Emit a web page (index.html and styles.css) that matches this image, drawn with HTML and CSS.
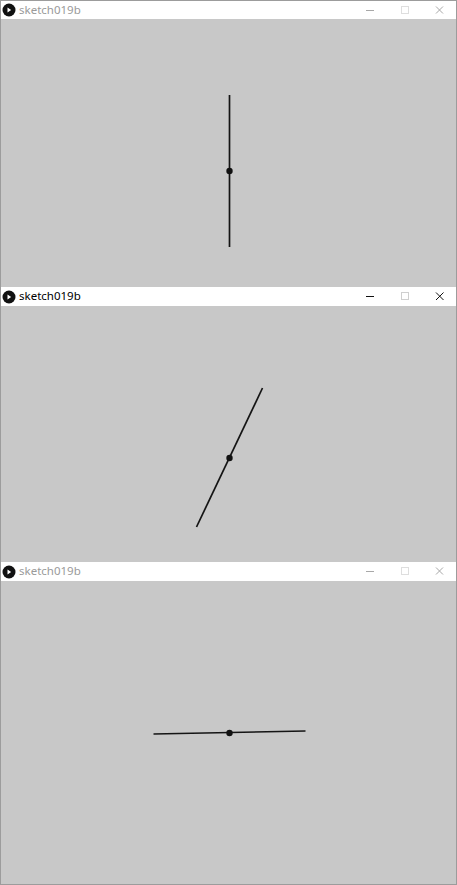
FILE: index.html
```html
<!DOCTYPE html>
<html>
<head>
<meta charset="utf-8">
<link rel="stylesheet" href="styles.css">
</head>
<body>
<div class="frame">
  <section class="win inactive">
    <header class="title t18">
      <span class="app-icon"><svg width="14" height="14" viewBox="0 0 14 14"><circle cx="7" cy="7" r="6.5" fill="#111"/><path d="M5.5 4.6 L9.2 7 L5.5 9.4 Z" fill="#fff"/></svg></span>
      <span class="name">sketch019b</span>
      <span class="ctrls">
        <svg class="ctl" width="36" height="18" viewBox="0 0 36 18"><path d="M13 9.5 H21" stroke="currentColor" stroke-width="1"/></svg>
        <svg class="ctl max" width="34" height="18" viewBox="0 0 34 18"><rect x="12.5" y="5.5" width="7" height="7" fill="none" stroke="currentColor"/></svg>
        <svg class="ctl" width="33" height="18" viewBox="0 0 33 18"><path d="M13 5.5 L20 12.5 M20 5.5 L13 12.5" stroke="currentColor" stroke-width="1"/></svg>
      </span>
    </header>
    <div class="canvas c1">
      <svg width="455" height="268" viewBox="0 0 455 268"><line x1="228.5" y1="76" x2="228.5" y2="228" class="stick"/><circle cx="228.5" cy="152" r="3.2" fill="#111"/></svg>
    </div>
  </section>
  <section class="win active">
    <header class="title t19">
      <span class="app-icon"><svg width="14" height="14" viewBox="0 0 14 14"><circle cx="7" cy="7" r="6.5" fill="#111"/><path d="M5.5 4.6 L9.2 7 L5.5 9.4 Z" fill="#fff"/></svg></span>
      <span class="name">sketch019b</span>
      <span class="ctrls">
        <svg class="ctl" width="36" height="19" viewBox="0 0 36 19"><path d="M13 9.5 H21" stroke="currentColor" stroke-width="1"/></svg>
        <svg class="ctl max" width="34" height="19" viewBox="0 0 34 19"><rect x="12.5" y="5.5" width="7" height="7" fill="none" stroke="currentColor"/></svg>
        <svg class="ctl" width="33" height="19" viewBox="0 0 33 19"><path d="M13 5.5 L20.5 13 M20.5 5.5 L13 13" stroke="currentColor" stroke-width="1"/></svg>
      </span>
    </header>
    <div class="canvas c2">
      <svg width="455" height="256" viewBox="0 0 455 256"><line x1="261.5" y1="82" x2="195.5" y2="221" class="stick"/><circle cx="228.5" cy="152" r="3.2" fill="#111"/></svg>
    </div>
  </section>
  <section class="win inactive">
    <header class="title t19">
      <span class="app-icon"><svg width="14" height="14" viewBox="0 0 14 14"><circle cx="7" cy="7" r="6.5" fill="#111"/><path d="M5.5 4.6 L9.2 7 L5.5 9.4 Z" fill="#fff"/></svg></span>
      <span class="name">sketch019b</span>
      <span class="ctrls">
        <svg class="ctl" width="36" height="19" viewBox="0 0 36 19"><path d="M13 9.5 H21" stroke="currentColor" stroke-width="1"/></svg>
        <svg class="ctl max" width="34" height="19" viewBox="0 0 34 19"><rect x="12.5" y="5.5" width="7" height="7" fill="none" stroke="currentColor"/></svg>
        <svg class="ctl" width="33" height="19" viewBox="0 0 33 19"><path d="M13 5.5 L20 12.5 M20 5.5 L13 12.5" stroke="currentColor" stroke-width="1"/></svg>
      </span>
    </header>
    <div class="canvas c3">
      <svg width="455" height="303" viewBox="0 0 455 303"><line x1="152.5" y1="153" x2="304.5" y2="150" class="stick"/><circle cx="228.5" cy="152" r="3.2" fill="#111"/></svg>
    </div>
  </section>
</div>
</body>
</html>
```

FILE: styles.css
```css
html, body {
  margin: 0;
  padding: 0;
  background: #c8c8c8;
}
.frame {
  width: 455px;
  border: 1px solid #9c9c9c;
  background: #c8c8c8;
  font-family: "Noto Sans", "Open Sans", sans-serif;
}
.win {
  display: flex;
  flex-direction: column;
}
.title {
  display: flex;
  align-items: center;
  background: #ffffff;
  font-size: 11.5px;
  line-height: 1;
}
.t18 { height: 18px; }
.t19 { height: 19px; }
.app-icon {
  display: flex;
  width: 14px;
  height: 14px;
  margin-left: 1px;
  margin-right: 3px;
}
.name {
  flex: 1;
  padding-bottom: 1px;
}
.inactive .name { color: #9a9a9a; }
.active .name { color: #000000; }
.ctrls {
  display: flex;
  align-items: center;
  margin-right: 0;
}
.ctl { display: block; }
.inactive .ctl { color: #a8a8a8; }
.inactive .ctl.max { color: #dedede; }
.active .ctl { color: #111111; }
.active .ctl.max { color: #cfcfcf; }
.canvas {
  background: #c8c8c8;
}
.canvas svg { display: block; }
.c1 { height: 268px; }
.c2 { height: 256px; }
.c3 { height: 303px; }
.stick {
  stroke: #141414;
  stroke-width: 1.7;
  stroke-linecap: butt;
}
```
